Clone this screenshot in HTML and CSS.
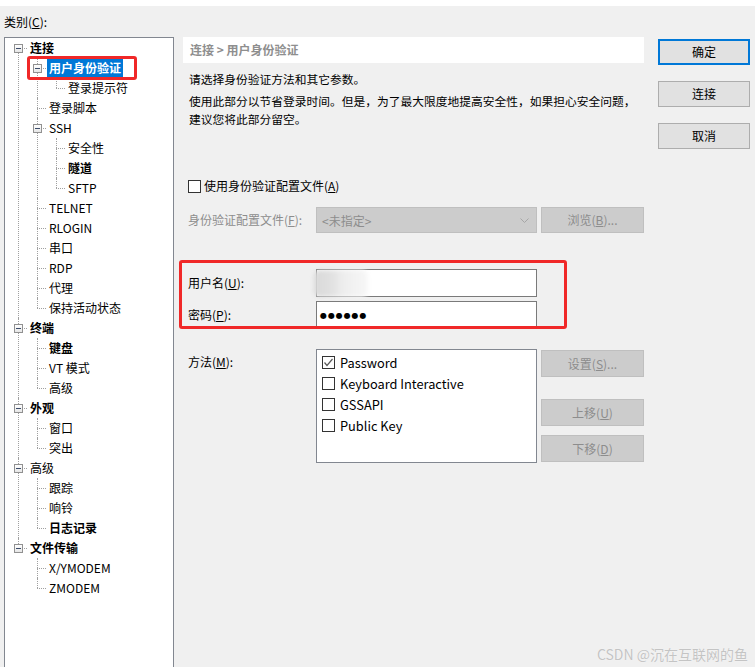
FILE: index.html
```html
<!DOCTYPE html>
<html lang="zh-CN">
<head>
<meta charset="utf-8">
<title>会话选项 - 用户身份验证</title>
<link rel="stylesheet" href="styles.css">
</head>
<body>
<div class="topstrip"></div>
<div class="window">
  <div class="left">
    <div class="cat-label">类别(<u>C</u>):</div>
    <div class="tree-box">
      <ul class="tree root">
        <li><div class="row"><span class="xbox"></span><span class="lbl b">连接</span></div>
          <ul class="tree">
            <li><div class="row"><span class="xbox"></span><span class="lbl b sel">用户身份验证</span><span class="annot"></span></div>
              <ul class="tree">
                <li><div class="row"><span class="lbl">登录提示符</span></div></li>
              </ul>
            </li>
            <li><div class="row"><span class="lbl">登录脚本</span></div></li>
            <li><div class="row"><span class="xbox"></span><span class="lbl">SSH</span></div>
              <ul class="tree">
                <li><div class="row"><span class="lbl">安全性</span></div></li>
                <li><div class="row"><span class="lbl b">隧道</span></div></li>
                <li><div class="row"><span class="lbl">SFTP</span></div></li>
              </ul>
            </li>
            <li><div class="row"><span class="lbl">TELNET</span></div></li>
            <li><div class="row"><span class="lbl">RLOGIN</span></div></li>
            <li><div class="row"><span class="lbl">串口</span></div></li>
            <li><div class="row"><span class="lbl">RDP</span></div></li>
            <li><div class="row"><span class="lbl">代理</span></div></li>
            <li><div class="row"><span class="lbl">保持活动状态</span></div></li>
          </ul>
        </li>
        <li><div class="row"><span class="xbox"></span><span class="lbl b">终端</span></div>
          <ul class="tree">
            <li><div class="row"><span class="lbl b">键盘</span></div></li>
            <li><div class="row"><span class="lbl">VT 模式</span></div></li>
            <li><div class="row"><span class="lbl">高级</span></div></li>
          </ul>
        </li>
        <li><div class="row"><span class="xbox"></span><span class="lbl b">外观</span></div>
          <ul class="tree">
            <li><div class="row"><span class="lbl">窗口</span></div></li>
            <li><div class="row"><span class="lbl">突出</span></div></li>
          </ul>
        </li>
        <li><div class="row"><span class="xbox"></span><span class="lbl">高级</span></div>
          <ul class="tree">
            <li><div class="row"><span class="lbl">跟踪</span></div></li>
            <li><div class="row"><span class="lbl">响铃</span></div></li>
            <li><div class="row"><span class="lbl b">日志记录</span></div></li>
          </ul>
        </li>
        <li><div class="row"><span class="xbox"></span><span class="lbl b">文件传输</span></div>
          <ul class="tree">
            <li><div class="row"><span class="lbl">X/YMODEM</span></div></li>
            <li><div class="row"><span class="lbl">ZMODEM</span></div></li>
          </ul>
        </li>
      </ul>
    </div>
  </div>

  <div class="main">
    <div class="crumb">连接 &gt; 用户身份验证</div>
    <p class="desc first">请选择身份验证方法和其它参数。</p>
    <p class="desc">使用此部分以节省登录时间。但是，为了最大限度地提高安全性，如果担心安全问题，<br>建议您将此部分留空。</p>

    <div class="chk-row"><span class="cb"></span><span>使用身份验证配置文件(<u>A</u>)</span></div>

    <div class="field-row profile">
      <span class="flabel disabled">身份验证配置文件(<u>F</u>):</span>
      <div class="select">
        <span>&lt;未指定&gt;</span>
        <svg class="chev" width="9" height="5" viewBox="0 0 9 5"><polyline points="0.5,0.5 4.5,4.5 8.5,0.5" fill="none" stroke="#a6a6a6" stroke-width="1"/></svg>
      </div>
      <div class="btn disabled">浏览(<u>B</u>)...</div>
    </div>

    <div class="creds">
      <div class="field-row user">
        <span class="flabel">用户名(<u>U</u>):</span>
        <div class="input"><span class="blur"></span></div>
      </div>
      <div class="field-row pass">
        <span class="flabel">密码(<u>P</u>):</span>
        <div class="input pw">●●●●●●</div>
      </div>
      <span class="annot-box"></span>
    </div>

    <div class="method-row">
      <span class="flabel mlabel">方法(<u>M</u>):</span>
      <div class="listbox">
        <div class="item"><span class="cb"><svg width="11" height="11" viewBox="0 0 11 11"><polyline points="1.5,5.5 4,8.5 9.5,2" fill="none" stroke="#5a5a5a" stroke-width="1.2"/></svg></span>Password</div>
        <div class="item"><span class="cb"></span>Keyboard Interactive</div>
        <div class="item"><span class="cb"></span>GSSAPI</div>
        <div class="item"><span class="cb"></span>Public Key</div>
      </div>
      <div class="side-btns">
        <div class="btn disabled">设置(<u>S</u>)...</div>
        <div class="btn disabled up">上移(<u>U</u>)</div>
        <div class="btn disabled">下移(<u>D</u>)</div>
      </div>
    </div>
  </div>

  <div class="buttons">
    <div class="btn action default">确定</div>
    <div class="btn action">连接</div>
    <div class="btn action">取消</div>
  </div>
</div>
<div class="watermark">CSDN @沉在互联网的鱼</div>
</body>
</html>
```

FILE: styles.css
```css
* { box-sizing: border-box; }
html, body {
  margin: 0;
  padding: 0;
}
body {
  width: 755px;
  height: 667px;
  overflow: hidden;
  position: relative;
  background: #f0f0f0;
  font-family: "Noto Sans CJK SC", "Noto Sans", sans-serif;
  font-size: 12px;
  color: #000;
}
u { text-decoration: underline; text-underline-offset: 1px; }

.topstrip { height: 6px; background: #ffffff; }

.window { display: flex; align-items: flex-start; }

/* left column */
.left { width: 177px; padding-left: 4px; }
.cat-label { height: 31px; padding-top: 8px; line-height: 16px; }
.tree-box {
  width: 170px;
  height: 660px;
  background: #fff;
  border: 1px solid #828790;
}
.tree { list-style: none; margin: 0; padding: 0; }
.tree .tree { margin-left: -4px; }
.tree li { position: relative; padding-left: 23px; }
.tree li::before {
  content: "";
  position: absolute;
  left: 13px; top: 10px; width: 9px;
  border-top: 1px dotted #a0a0a0;
}
.tree li::after {
  content: "";
  position: absolute;
  left: 13px; top: 0; bottom: 0;
  border-left: 1px dotted #a0a0a0;
}
.tree li:last-child::after { bottom: auto; height: 10px; }
.root > li:first-child::after { top: 10px; }
.row { height: 20px; display: flex; align-items: center; }
.lbl { line-height: 18px; padding: 0 2px; white-space: nowrap; }
.lbl.b { font-weight: bold; }
.lbl.sel { background: #0078d7; color: #fff; }
.xbox {
  position: absolute;
  left: 9px; top: 6px;
  width: 9px; height: 9px;
  background: linear-gradient(#ffffff, #e6e6e6);
  border: 1px solid #919191;
  z-index: 1;
}
.xbox::after {
  content: "";
  position: absolute;
  left: 1px; top: 3px; width: 5px; height: 1px;
  background: #3c4c6a;
}
.annot {
  position: absolute;
  left: 3px; top: -2px;
  width: 110px; height: 24px;
  border: 3px solid #f02828;
  border-radius: 3px;
  z-index: 2;
}

/* main column */
.main { width: 461px; margin-left: 6px; margin-top: 31px; }
.crumb {
  height: 26px;
  background: #fff;
  line-height: 26px;
  padding-left: 7px;
  color: #8e8e8e;
  font-weight: bold;
}
.desc {
  margin: 4px 0 0 0;
  padding-left: 6px;
  line-height: 18px;
  font-size: 11.75px;
  white-space: nowrap;
}
.desc.first { margin-top: 7px; }

.chk-row {
  margin-top: 49px;
  height: 18px;
  display: flex;
  align-items: center;
  padding-left: 5px;
  line-height: 18px;
}
.cb {
  width: 13px; height: 13px;
  border: 1px solid #333;
  background: #fff;
  margin-right: 3px;
  display: inline-flex;
  align-items: center;
  justify-content: center;
  flex: none;
}

.field-row { display: flex; align-items: center; }
.flabel { width: 133px; padding-left: 5px; line-height: 18px; white-space: nowrap; flex: none; }
.disabled { color: #8d8d8d; }
.profile { margin-top: 12px; height: 26px; }
.select {
  width: 221px; height: 26px;
  background: #cccccc;
  border: 1px solid #bfbfbf;
  color: #8d8d8d;
  display: flex;
  align-items: center;
  justify-content: space-between;
  padding: 0 7px 0 5px;
}
.btn {
  display: flex;
  align-items: center;
  justify-content: center;
  line-height: 18px;
}
.profile .btn { margin-left: 4px; width: 103px; height: 26px; }
.btn.disabled { background: #cccccc; border: 1px solid #bfbfbf; color: #8d8d8d; }

.creds { position: relative; margin-top: 36px; }
.input {
  width: 221px; height: 28px;
  background: #fff;
  border: 1px solid #7a7a7a;
  display: flex;
  align-items: center;
}
.pass { margin-top: 4px; }
.blur {
  display: block;
  width: 54px; height: 27px;
  margin-left: -3px;
  background: linear-gradient(90deg, #d9d9d9 0%, #e0e0e0 30%, #eeeeee 55%, #f7f7f7 100%);
  filter: blur(2px);
  border-radius: 6px;
}
.input.pw {
  padding-left: 3px;
  font-family: "DejaVu Sans", sans-serif;
  font-size: 8px;
  letter-spacing: 0.9px;
  color: #000;
}
.annot-box {
  position: absolute;
  left: -4px; top: -9px;
  width: 388px; height: 69px;
  border: 3px solid #f02828;
  border-radius: 3px;
}

.method-row { display: flex; align-items: flex-start; margin-top: 20px; }
.mlabel { margin-top: 4px; }
.listbox {
  width: 221px; height: 114px;
  background: #fff;
  border: 1px solid #828790;
  padding-top: 2px;
  font-size: 12.8px;
}
.item { height: 21px; display: flex; align-items: center; padding-left: 5px; white-space: nowrap; }
.item .cb { margin-right: 5px; }
.side-btns { margin-left: 4px; margin-top: 1px; width: 103px; display: flex; flex-direction: column; }
.side-btns .btn { height: 27px; margin-bottom: 9px; }
.side-btns .btn.up { margin-top: 13px; }

/* right buttons */
.buttons { margin-left: 14px; margin-top: 33px; width: 92px; display: flex; flex-direction: column; gap: 16px; }
.btn.action {
  height: 26px;
  background: #e1e1e1;
  border: 1px solid #adadad;
}
.btn.action.default { border: 2px solid #0078d7; }

.watermark {
  position: absolute;
  right: 7px; bottom: 4px;
  font-size: 14px;
  line-height: 18px;
  color: #c4c4c4;
  text-shadow: 0 0 1px #fff;
}
```
